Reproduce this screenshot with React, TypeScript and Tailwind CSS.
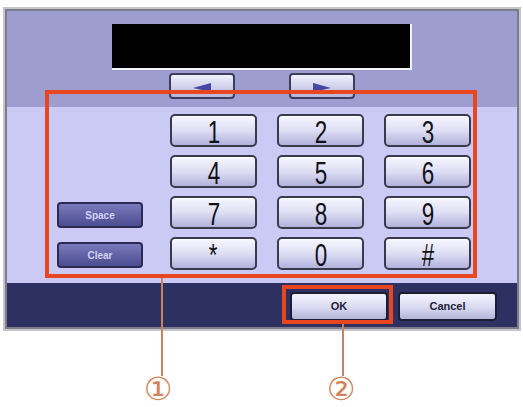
import type { ReactNode } from "react";

const keys = ["1", "2", "3", "4", "5", "6", "7", "8", "9", "*", "0", "#"];

const font = "font-['Liberation_Sans',Arial,sans-serif]";

function Key({ label }: { label: string }) {
  return (
    <button
      type="button"
      className="flex h-[33px] w-[87px] items-center justify-center rounded-[5px] border-2 border-[#3a3a4c] bg-linear-to-b from-[#f7f7ff] via-[#dedef4] to-[#b2b2dc] shadow-[inset_0_1px_0_#ffffff]"
    >
      <span
        className={`${font} inline-block origin-center scale-x-[0.7] pt-[2px] text-[32px] leading-none text-[#111118]`}
      >
        {label}
      </span>
    </button>
  );
}

function DarkButton({ children }: { children: ReactNode }) {
  return (
    <button
      type="button"
      className={`${font} flex h-[26px] w-[86px] items-center justify-center rounded-[4px] border-2 border-[#2a2a52] bg-linear-to-b from-[#7a7abc] to-[#4c4c90] text-[10px] font-bold text-[#d2d2f4]`}
    >
      {children}
    </button>
  );
}

function LightButton({ children, width }: { children: ReactNode; width: string }) {
  return (
    <button
      type="button"
      className={`${font} ${width} flex h-[29px] items-center justify-center rounded-[4px] border-2 border-[#1c1c34] bg-linear-to-b from-[#f4f4fe] via-[#dcdcf2] to-[#b4b4da] text-[11px] font-bold text-[#22223c]`}
    >
      {children}
    </button>
  );
}

function ArrowButton({ dir }: { dir: "left" | "right" }) {
  return (
    <button
      type="button"
      className="flex h-[26px] w-[66px] items-end justify-center rounded-[4px] border-2 border-[#3c3c5c] bg-linear-to-b from-[#f0f0fc] to-[#b6b6dc] pb-[5px]"
    >
      <svg width="18" height="9" viewBox="0 0 18 9">
        {dir === "left" ? (
          <polygon points="0,5 18,0 18,9" fill="#4646a4" />
        ) : (
          <polygon points="18,5 0,0 0,9" fill="#4646a4" />
        )}
      </svg>
    </button>
  );
}

export default function App() {
  return (
    <div className="relative h-[407px] w-[523px] bg-white">
      <div className="ml-[3px] pt-[7px] w-[518px]">
        <div className="border-2 border-[#c4c4ca]">
          <div className="border-2 border-[#7c7c8c]">
            {/* upper band */}
            <div className="flex h-[96px] flex-col items-center bg-[#9d9dd0] pt-[13px]">
              <div className="h-[46px] w-[300px] border-b-2 border-r-2 border-[#f2f2f8] bg-black" />
              <div className="mt-[3px] flex gap-[54px]">
                <ArrowButton dir="left" />
                <ArrowButton dir="right" />
              </div>
            </div>

            {/* keypad */}
            <div className="flex h-[176px] bg-[#cacaf5] pl-[50px] pt-[7px]">
              <div className="flex h-[154px] flex-col justify-end gap-[14px]">
                <DarkButton>Space</DarkButton>
                <DarkButton>Clear</DarkButton>
              </div>
              <div className="ml-[27px] grid grid-cols-3 gap-x-[20px] gap-y-[8px] self-start">
                {keys.map((k) => (
                  <Key key={k} label={k} />
                ))}
              </div>
            </div>

            {/* bottom bar */}
            <div className="flex h-[44px] justify-end gap-[10px] bg-[#2e3062] pr-[20px] pt-[9px]">
              <LightButton width="w-[98px]">OK</LightButton>
              <LightButton width="w-[99px]">Cancel</LightButton>
            </div>
          </div>
        </div>
      </div>

      {/* annotations */}
      <div className="pointer-events-none absolute left-[45px] top-[90px] h-[188px] w-[432px] border-4 border-[#e8461e]" />
      <div className="pointer-events-none absolute left-[282px] top-[285px] h-[39px] w-[111px] border-4 border-[#e8461e]" />
      <div className="absolute left-[161px] top-[278px] h-[98px] w-[2px] bg-[#c48460]" />
      <div className="absolute left-[342px] top-[324px] h-[52px] w-[2px] bg-[#c48460]" />
      <span className="absolute left-[158px] top-[372px] w-[40px] -translate-x-1/2 text-center font-['DejaVu_Sans',sans-serif] text-[32px] leading-[35px] text-[#d2825a]">
        ①
      </span>
      <span className="absolute left-[341px] top-[372px] w-[40px] -translate-x-1/2 text-center font-['DejaVu_Sans',sans-serif] text-[32px] leading-[35px] text-[#d2825a]">
        ②
      </span>
    </div>
  );
}
